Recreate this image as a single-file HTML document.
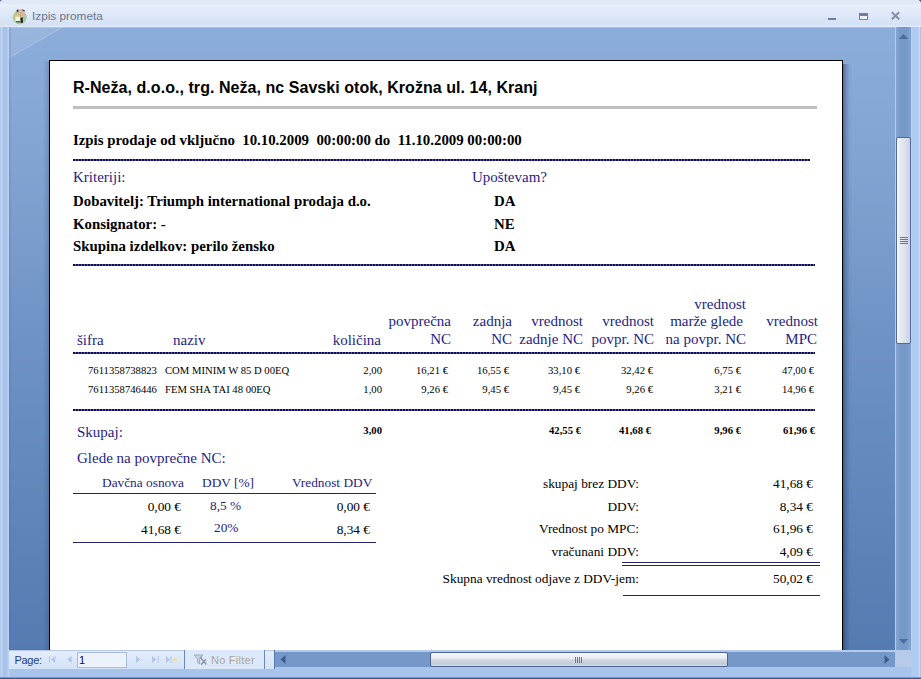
<!DOCTYPE html>
<html lang="sl">
<head>
<meta charset="utf-8">
<title>Izpis prometa</title>
<style>
html,body{margin:0;padding:0;}
body{width:921px;height:679px;overflow:hidden;position:relative;background:#a9c5ec;font-family:"Liberation Serif",serif;}
.abs,.t{position:absolute;}
.t{white-space:nowrap;line-height:1;}
/* window chrome */
#frame{position:absolute;left:0;top:0;width:921px;height:679px;background:linear-gradient(90deg,#9fbbe4 0,#c3d6f3 1px,#bdd2f1 2px,#a9c4eb 3px,#a9c4eb 7px,#bbd0f0 8px,#bbd0f0 9px,#a9c4eb 10px,#a9c4eb 911px,#b1cbf0 912px,#b1cbf0 918px,#c3d9f7 919px,#c3d9f7 920px,#a9c3ea 920px,#a9c3ea 921px);}
#titlebar{position:absolute;left:0;top:0;width:921px;height:27px;background:linear-gradient(#e1e9f8 0,#e0e9f8 4px,#ecf2fc 5px,#e7eefb 6px,#dde8f8 15px,#d4e1f5 25px,#dfe9f9 26px,#dfe9f9 27px);}
#client{position:absolute;left:9px;top:27px;width:886px;height:623px;background:linear-gradient(#8cadda 0,#86a7d5 15%,#7a9dcd 33%,#6e92c4 50%,#638abd 70%,#5a81b6 88%,#557cb2 100%);overflow:hidden;}
#vscroll{position:absolute;left:895px;top:27px;width:17px;height:623px;background:linear-gradient(90deg,#b3cbef 0,#b3cbef 1px,#86a4d2 1px,#7799c8 5px,#7799c8 11px,#84a2d0 16px,#bad0f2 16px,#bad0f2 17px);}
#nav{position:absolute;left:9px;top:650px;width:265px;height:19px;background:linear-gradient(#8aa5d0 0,#e2ecfb 1px,#dce8fa 10px,#d3e2f7 19px);}
#page{position:absolute;left:40px;top:33px;width:792px;height:600px;background:#fff;border:1px solid #000;}
.ui{font-family:"Liberation Sans",sans-serif;}
/* document */
.navy{color:#1e1e86 !important;}
.b{font-weight:bold;}
.h15{font-size:15px;}
.b.h15{font-size:14.85px;}
.r11{font-size:10.67px;color:#000;}
.dash{position:absolute;height:2px;background:repeating-linear-gradient(90deg,#0c0c58 0,#0c0c58 2px,#5c5ca0 2px,#5c5ca0 3px);}
.s13{font-size:13.33px;}
.ra{text-align:right;}
.line{position:absolute;height:1px;background:#23236e;}
</style>
</head>
<body>
<div id="frame"></div>
<div id="titlebar"></div>
<div class="t ui" style="left:32px;top:11px;font-size:11.8px;color:#6b768b;">Izpis prometa</div>
<div id="client">
  <svg class="abs" style="left:0;top:0;" width="70" height="40" viewBox="0 0 70 40"><path d="M0 0 H54 L0 31 Z" fill="rgba(255,255,255,0.10)"/><path d="M54 0 L0 31" stroke="rgba(255,255,255,0.16)" stroke-width="1.2"/></svg>
  <div class="abs" style="left:0;top:0;width:886px;height:1px;background:rgba(255,255,255,.22);"></div>
  <div class="abs" style="left:0;top:0;width:2px;height:623px;background:rgba(90,100,170,.18);"></div>
  <div class="abs" style="left:34px;top:34px;width:6px;height:600px;background:linear-gradient(90deg,rgba(30,50,100,0),rgba(30,50,100,.22));"></div>
  <div id="page"></div>
  <div class="abs" style="left:834px;top:37px;width:9px;height:600px;background:linear-gradient(90deg,rgba(10,25,55,.42),rgba(20,40,80,.22) 35%,rgba(40,70,120,.07) 70%,rgba(60,90,150,0));"></div>
</div>
<div id="vscroll"></div>
<div id="nav"></div>


<svg class="abs" style="left:0;top:0;" width="3" height="3"><path d="M0 0 H1.8 L0 1.8 Z" fill="#55678a"/></svg>
<svg class="abs" style="left:918px;top:0;" width="3" height="3"><path d="M3 0 H0.8 L3 2.2 Z" fill="#4a5c80"/></svg>
<!-- window buttons -->
<div class="abs" style="left:828px;top:18px;width:8px;height:2px;background:#6f7f9b;"></div>
<div class="abs" style="left:859px;top:13px;width:9px;height:7px;box-sizing:border-box;border:1px solid #7384a3;border-top:3px solid #6f809f;background:#eef3fb;"></div>
<svg class="abs" style="left:890px;top:11px;" width="11" height="9" viewBox="0 0 11 9"><path d="M1.8 1.2 L9.2 8.2 M9.2 1.2 L1.8 8.2" stroke="#8490aa" stroke-width="2" fill="none"/></svg>
<!-- app icon -->
<svg class="abs" style="left:11px;top:8px;" width="18" height="18" viewBox="0 0 18 18">
  <defs><filter id="sf" x="-10%" y="-10%" width="120%" height="120%"><feGaussianBlur stdDeviation="0.45"/></filter></defs>
  <g filter="url(#sf)">
  <circle cx="8.7" cy="9.4" r="7" fill="#abc99d"/>
  <path d="M6 2.2 Q9.5 0.2 13.4 2.6 L13.8 8.2 L6.4 8.6 Z" fill="#d8b99c"/>
  <path d="M5.6 2 l1.6 -0.8 l0.4 2.2 l-1.8 0.8z M11 1.2 l2.6 1.0 l0.2 1.4 l-2.4 -1.2z" fill="#3a2a3a"/>
  <rect x="2.4" y="6.6" width="5" height="2.2" fill="#e8c45a"/>
  <path d="M4.2 8.8 L11 8.6 L11.4 13.2 L4.6 13.6 Z" fill="#f4f0e2"/>
  <path d="M9.3 9.6 L11.7 9.2 L11.9 14.8 L9.6 15 Z" fill="#1c2418"/>
  <rect x="5.2" y="13" width="3.6" height="1.4" fill="#2f5a35"/>
  <rect x="9" y="4" width="0.9" height="6" fill="#c69a84"/>
  </g>
</svg>
<!-- vscroll parts -->
<svg class="abs" style="left:899px;top:34px;" width="9" height="5" viewBox="0 0 9 5"><path d="M0 5 L4.5 0 L9 5 Z" fill="#4c6ba0"/></svg>
<div class="abs" style="left:896px;top:137px;width:15px;height:207px;box-sizing:border-box;border:1px solid #54689a;border-radius:2px;background:linear-gradient(90deg,#f6f8fc 0,#f6f8fc 1px,#e9edf5 2px,#dfe5f0 50%,#c9d3e4 100%);"></div>
<div class="abs" style="left:900px;top:237px;width:8px;height:7px;background:repeating-linear-gradient(#66779a 0,#66779a 1px,transparent 1px,transparent 2px);"></div>
<svg class="abs" style="left:899px;top:639px;" width="9" height="5" viewBox="0 0 9 5"><path d="M0 0 L4.5 5 L9 0 Z" fill="#4c6ba0"/></svg>

<!-- nav bar contents -->
<div class="t ui" style="left:14.5px;top:655px;font-size:11px;letter-spacing:-.3px;color:#1d3a80;">Page:</div>
<svg class="abs" style="left:49px;top:656px;" width="8" height="7" viewBox="0 0 8 7"><path d="M0.5 0 V7" stroke="#b3c6e5" stroke-width="1"/><path d="M6.4 0 L2 3.5 L6.4 7 Z" fill="#b3c6e5"/></svg>
<svg class="abs" style="left:67px;top:656px;" width="6" height="7" viewBox="0 0 6 7"><path d="M4.6 0 L0.2 3.5 L4.6 7 Z" fill="#b3c6e5"/></svg>
<div class="abs" style="left:77px;top:652px;width:50px;height:16px;box-sizing:border-box;border:1px solid #a9bcd9;background:#ebf2fc;"></div>
<div class="t ui" style="left:79px;top:655px;font-size:11px;color:#10103c;">1</div>
<svg class="abs" style="left:136px;top:656px;" width="6" height="7" viewBox="0 0 6 7"><path d="M0 0 L4.4 3.5 L0 7 Z" fill="#b3c6e5"/></svg>
<svg class="abs" style="left:152px;top:656px;" width="8" height="7" viewBox="0 0 8 7"><path d="M0 0 L4.4 3.5 L0 7 Z" fill="#b3c6e5"/><path d="M6.3 0 V7" stroke="#b3c6e5" stroke-width="1"/></svg>
<svg class="abs" style="left:166px;top:656px;" width="12" height="7" viewBox="0 0 12 7"><path d="M0 0 L4 3.5 L0 7 Z" fill="#b3c6e5"/><path d="M5 0 V7" stroke="#b3c6e5" stroke-width="1"/><path d="M8.6 0.6 L9.4 2.6 L11.4 2.2 L10 3.6 L11.2 5.6 L9 4.8 L7.4 6.4 L7.6 4.2 L6 3.2 L8 2.8 Z" fill="#eadf9c"/></svg>
<div class="abs" style="left:184px;top:650px;width:1px;height:19px;background:#6a88bb;"></div>
<div class="abs" style="left:185px;top:650px;width:79px;height:19px;background:#dde9fa;"></div>
<svg class="abs" style="left:193px;top:654px;" width="15" height="12" viewBox="0 0 15 12"><path d="M1 1 H10 L6.6 5 V10 L4.6 8.6 V5 Z" fill="#c9d3e2" stroke="#9aa6ba" stroke-width="0.9"/><path d="M7 3 L13.4 10.6 M13 5.4 L8 10.6" stroke="#8e99ad" stroke-width="1.6" fill="none"/></svg>
<div class="t ui" style="left:211px;top:655px;font-size:11px;letter-spacing:.25px;color:#a6a69c;">No Filter</div>
<div class="abs" style="left:264px;top:650px;width:1px;height:19px;background:#6a88bb;"></div>
<!-- hscroll -->
<div class="abs" style="left:274px;top:650px;width:637px;height:19px;background:linear-gradient(#b3caec 0,#b3caec 2px,#a9c4eb 17px,#a9c4eb 19px);"></div>
<div class="abs" style="left:274px;top:650px;width:1px;height:19px;background:#5878b0;"></div>
<div class="abs" style="left:275px;top:652px;width:620px;height:15px;background:#7698c9;"></div>
<svg class="abs" style="left:280px;top:655px;" width="6" height="9" viewBox="0 0 6 9"><path d="M5.5 0 L0.5 4.5 L5.5 9 Z" fill="#3f5c90"/></svg>
<svg class="abs" style="left:884px;top:655px;" width="6" height="9" viewBox="0 0 6 9"><path d="M0.5 0 L5.5 4.5 L0.5 9 Z" fill="#3f5c90"/></svg>
<div class="abs" style="left:430px;top:652px;width:298px;height:15px;box-sizing:border-box;border:1px solid #51648f;border-radius:2px;background:linear-gradient(#f5f7fa 0,#e9ecf1 40%,#d0d7e1 55%,#c4ccd9 85%,#d6dce6 100%);"></div>
<div class="abs" style="left:575px;top:657px;width:8px;height:6px;background:repeating-linear-gradient(90deg,#66779a 0,#66779a 1px,transparent 1px,transparent 2px);"></div>
<div class="abs" style="left:895px;top:650px;width:17px;height:17px;background:#b6cae9;"></div>
<!-- bottom edge -->
<div class="abs" style="left:0;top:677px;width:921px;height:2px;background:linear-gradient(#7b98c6 0,#7b98c6 1px,#3b5889 1px,#3b5889 2px);"></div>

<!-- document text (absolute in body coords) -->
<div id="doc">
<div class="t b" style="left:73px;top:80px;font-size:16px;letter-spacing:.05px;font-family:'Liberation Sans',sans-serif;color:#000;">R-Neža, d.o.o., trg. Neža, nc Savski otok, Krožna ul. 14, Kranj</div>
<div class="abs" style="left:73px;top:106px;width:744px;height:3px;background:#c0c0c0;"></div>
<div class="t b h15" style="left:73px;top:133px;white-space:pre;">Izpis prodaje od vključno  10.10.2009  00:00:00 do  11.10.2009 00:00:00</div>
<div class="dash" style="left:73px;top:159px;width:737px;"></div>
<div class="t navy h15" style="left:73px;top:170px;">Kriteriji:</div>
<div class="t navy h15" style="left:472px;top:170px;">Upoštevam?</div>
<div class="t b h15" style="left:73px;top:194px;">Dobavitelj: Triumph international prodaja d.o.</div>
<div class="t b h15" style="left:494px;top:194px;">DA</div>
<div class="t b h15" style="left:73px;top:217px;">Konsignator: -</div>
<div class="t b h15" style="left:494px;top:217px;">NE</div>
<div class="t b h15" style="left:73px;top:239px;">Skupina izdelkov: perilo žensko</div>
<div class="t b h15" style="left:494px;top:239px;">DA</div>
<div class="dash" style="left:73px;top:264px;width:742px;"></div>

<!-- table header -->
<div class="t navy h15" style="left:77px;top:333px;">šifra</div>
<div class="t navy h15" style="left:173px;top:333px;">naziv</div>
<div class="t navy h15 ra" style="right:540px;top:333px;">količina</div>
<div class="t navy h15 ra" style="right:470px;top:314px;">povprečna</div>
<div class="t navy h15 ra" style="right:470px;top:331.5px;">NC</div>
<div class="t navy h15 ra" style="right:409px;top:314px;">zadnja</div>
<div class="t navy h15 ra" style="right:409px;top:331.5px;">NC</div>
<div class="t navy h15 ra" style="right:338px;top:314px;">vrednost</div>
<div class="t navy h15 ra" style="right:338px;top:331.5px;">zadnje NC</div>
<div class="t navy h15 ra" style="right:267px;top:314px;">vrednost</div>
<div class="t navy h15 ra" style="right:267px;top:331.5px;">povpr. NC</div>
<div class="t navy h15 ra" style="right:175px;top:297px;">vrednost</div>
<div class="t navy h15 ra" style="right:178px;top:314px;">marže glede</div>
<div class="t navy h15 ra" style="right:175px;top:331.5px;">na povpr. NC</div>
<div class="t navy h15 ra" style="right:103px;top:314px;">vrednost</div>
<div class="t navy h15 ra" style="right:104px;top:331.5px;">MPC</div>
<div class="dash" style="left:73px;top:352px;width:742px;"></div>
<!-- rows -->
<div class="t r11" style="left:88px;top:365px;">7611358738823</div>
<div class="t r11" style="left:165px;top:365px;">COM MINIM W 85 D 00EQ</div>
<div class="t r11 ra" style="right:539px;top:365px;">2,00</div>
<div class="t r11 ra" style="right:473px;top:365px;">16,21 €</div>
<div class="t r11 ra" style="right:412px;top:365px;">16,55 €</div>
<div class="t r11 ra" style="right:341px;top:365px;">33,10 €</div>
<div class="t r11 ra" style="right:268px;top:365px;">32,42 €</div>
<div class="t r11 ra" style="right:180px;top:365px;">6,75 €</div>
<div class="t r11 ra" style="right:107px;top:365px;">47,00 €</div>
<div class="t r11" style="left:88px;top:383.5px;">7611358746446</div>
<div class="t r11" style="left:165px;top:383.5px;">FEM SHA TAI 48 00EQ</div>
<div class="t r11 ra" style="right:539px;top:383.5px;">1,00</div>
<div class="t r11 ra" style="right:473px;top:383.5px;">9,26 €</div>
<div class="t r11 ra" style="right:412px;top:383.5px;">9,45 €</div>
<div class="t r11 ra" style="right:341px;top:383.5px;">9,45 €</div>
<div class="t r11 ra" style="right:268px;top:383.5px;">9,26 €</div>
<div class="t r11 ra" style="right:180px;top:383.5px;">3,21 €</div>
<div class="t r11 ra" style="right:107px;top:383.5px;">14,96 €</div>
<div class="dash" style="left:73px;top:409px;width:742px;"></div>
<!-- totals -->
<div class="t navy h15" style="left:77px;top:425px;">Skupaj:</div>
<div class="t r11 b ra" style="right:539px;top:425px;">3,00</div>
<div class="t r11 b ra" style="right:340px;top:425px;">42,55 €</div>
<div class="t r11 b ra" style="right:270px;top:425px;">41,68 €</div>
<div class="t r11 b ra" style="right:180px;top:425px;">9,96 €</div>
<div class="t r11 b ra" style="right:106px;top:425px;">61,96 €</div>
<div class="t navy h15" style="left:77px;top:451px;">Glede na povprečne NC:</div>
<!-- small table -->
<div class="t navy s13" style="left:102px;top:476px;">Davčna osnova</div>
<div class="t navy s13" style="left:202px;top:476px;">DDV [%]</div>
<div class="t navy s13" style="left:292px;top:476px;">Vrednost DDV</div>
<div class="line" style="left:73px;top:493px;width:303px;"></div>
<div class="t s13 ra" style="right:740px;top:500px;">0,00 €</div>
<div class="t navy s13" style="left:210px;top:499px;">8,5 %</div>
<div class="t s13 ra" style="right:551px;top:500px;">0,00 €</div>
<div class="t s13 ra" style="right:740px;top:523px;">41,68 €</div>
<div class="t navy s13" style="left:214px;top:521px;">20%</div>
<div class="t s13 ra" style="right:551px;top:523px;">8,34 €</div>
<div class="line" style="left:73px;top:542px;width:303px;"></div>
<!-- right summary -->
<div class="t s13 ra" style="right:282px;top:477px;">skupaj brez DDV:</div>
<div class="t s13 ra" style="right:108px;top:477px;">41,68 €</div>
<div class="t s13 ra" style="right:282px;top:500px;">DDV:</div>
<div class="t s13 ra" style="right:108px;top:500px;">8,34 €</div>
<div class="t s13 ra" style="right:282px;top:522px;">Vrednost po MPC:</div>
<div class="t s13 ra" style="right:108px;top:522px;">61,96 €</div>
<div class="t s13 ra" style="right:282px;top:545px;">vračunani DDV:</div>
<div class="t s13 ra" style="right:108px;top:545px;">4,09 €</div>
<div class="line" style="left:622px;top:562px;width:198px;"></div>
<div class="line" style="left:622px;top:565px;width:198px;"></div>
<div class="t s13 ra" style="right:282px;top:571.5px;">Skupna vrednost odjave z DDV-jem:</div>
<div class="t s13 ra" style="right:108px;top:571.5px;">50,02 €</div>
<div class="line" style="left:623px;top:595px;width:197px;"></div>
</div>

</body>
</html>
